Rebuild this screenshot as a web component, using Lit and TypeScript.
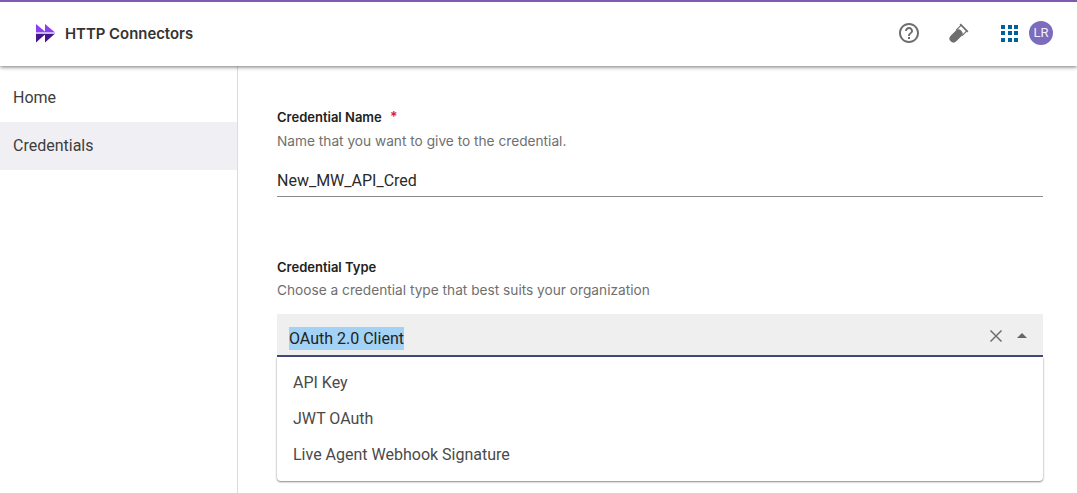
import { LitElement, html, css } from "lit";
import { customElement } from "lit/decorators.js";

@customElement("app-root")
export class AppRoot extends LitElement {
  static styles = css`
    :host { display: block; width: 1077px; height: 493px; overflow: hidden; background: #fff; font-family: Roboto, sans-serif; color: #3a3a3a; }
    .header { position: relative; z-index: 2; border-top: 2px solid #7d5bb0; background: #fff; box-shadow: 0 1px 4px rgba(0,0,0,.55); display: flex; align-items: center; padding: 0 24px 2px 36px; box-sizing: border-box; height: 66px; }
    .logo { width: 19px; height: 19px; margin-right: 10px; flex: none; }
    .title { font: 600 14.9px Inter, sans-serif; color: #333; flex: 1; padding-top: 2px; }
    .help { width: 24px; height: 24px; margin-right: 26px; }
    .flask { width: 24px; height: 24px; margin-right: 30px; }
    .grid { width: 17px; height: 17px; margin-right: 11px; display: grid; grid-template-columns: repeat(3, 4px); grid-auto-rows: 4px; gap: 2.5px; }
    .grid i { background: #00609c; display: block; }
    .avatar { width: 24px; height: 24px; border-radius: 50%; background: #7d6bbd; color: #f2f0fa; font: 400 13px/24px Roboto, sans-serif; text-align: center; }
    .body { display: flex; height: 427px; }
    .side { width: 237px; border-right: 1px solid #dcdcdc; padding-top: 8px; flex: none; }
    .nav { height: 48px; padding-left: 13px; padding-bottom: 1px; display: flex; align-items: center; font-size: 16px; line-height: 20px; box-sizing: border-box; color: #3d3d3d; }
    .nav.active { background: #f0f0f4; }
    .main { flex: 1; padding: 43px 34px 0 39px; }
    .label { font: 600 13px/16px Inter, sans-serif; color: #222; }
    .req { color: #e0202e; margin-left: 5px; font-size: 14px; }
    .hint { font: 400 13.7px/16px Inter, sans-serif; color: #6f6f6f; margin-top: 8px; }
    .input { height: 34px; margin-top: 14px; box-sizing: border-box; border-bottom: 1px solid #8a8a8a; font: 400 16px/35px Roboto, sans-serif; color: #2a2a2a; }
    .field2 { margin-top: 62px; }
    .field2 .hint { margin-top: 7px; }
    .combo { position: relative; margin-top: 16px; }
    .select { height: 43px; box-sizing: border-box; background: #efefef; border-bottom: 2px solid #444a7a; display: flex; align-items: center; padding: 8px 13px 0 12px; }
    .select .val { flex: 1; font-size: 16px; line-height: 23px; color: #222; }
    .val span { background: #a2d2f5; display: inline-block; }
    .x { width: 14px; height: 14px; margin-right: 14px; margin-top: -5px; }
    .caret { width: 0; height: 0; border: 5px solid transparent; border-top: 0; border-bottom: 5px solid #666; margin-top: -6px; margin-right: 3px; }
    .menu { position: absolute; left: 0; right: 0; top: 43px; height: 124px; background: #fff; border-radius: 0 0 4px 4px; box-shadow: 0 1px 2px rgba(0,0,0,.45), 0 0 3px rgba(0,0,0,.08); padding: 7px 0; box-sizing: border-box; }
    .opt { height: 36px; padding-left: 16px; display: flex; align-items: center; font-size: 16px; color: #4a4a4a; }
  `;

  render() {
    return html`
      <div class="header">
        <svg class="logo" viewBox="0 0 19 19">
          <path d="M0 0 L9.500 8 H0 Z M9 0 L18.500 8 H9 Z" fill="#8c3ff0"/>
          <rect x="0" y="8" width="19" height="2" fill="#c9b4f0"/>
          <path d="M0 10 H9.500 L0 18.500 Z M9 10 H18.500 L9 18.500 Z" fill="#45158c"/>
        </svg>
        <div class="title">HTTP Connectors</div>
        <svg class="help" viewBox="0 0 24 24" fill="#6e6e6e"><path d="M11 18h2v-2h-2v2zm1-16C6.480 2 2 6.480 2 12s4.480 10 10 10 10-4.480 10-10S17.520 2 12 2zm0 18c-4.410 0-8-3.590-8-8s3.590-8 8-8 8 3.590 8 8-3.590 8-8 8zm0-14c-2.210 0-4 1.790-4 4h2c0-1.100.900-2 2-2s2 .900 2 2c0 2-3 1.750-3 5h2c0-2.250 3-2.500 3-5 0-2.210-1.790-4-4-4z"/></svg>
        <svg class="flask" viewBox="0 0 24 24" fill="none" stroke="#6e6e6e">
          <path d="M6.500 17.500L11.500 12.500" stroke-width="8" stroke-linecap="round"/>
          <path d="M9.200 9.200L14.200 4.200M14.800 14.800L19.800 9.800" stroke-width="1.200"/>
          <path d="M13.200 3.200L20.800 10.800" stroke-width="1.800"/>
        </svg>
        <div class="grid">${Array.from({ length: 9 }, () => html`<i></i>`)}</div>
        <div class="avatar">LR</div>
      </div>
      <div class="body">
        <div class="side">
          <div class="nav">Home</div>
          <div class="nav active">Credentials</div>
        </div>
        <div class="main">
          <div class="label">Credential Name <span class="req">*</span></div>
          <div class="hint">Name that you want to give to the credential.</div>
          <div class="input">New_MW_API_Cred</div>
          <div class="field2">
            <div class="label">Credential Type</div>
            <div class="hint">Choose a credential type that best suits your organization</div>
            <div class="combo">
              <div class="select">
                <div class="val"><span>OAuth 2.0 Client</span></div>
                <svg class="x" viewBox="0 0 14 14" stroke="#6e6e6e" stroke-width="1.500" fill="none"><path d="M1.500 1.500l11 11M12.500 1.500l-11 11"/></svg>
                <div class="caret"></div>
              </div>
              <div class="menu">
                <div class="opt">API Key</div>
                <div class="opt">JWT OAuth</div>
                <div class="opt">Live Agent Webhook Signature</div>
              </div>
            </div>
          </div>
        </div>
      </div>
    `;
  }
}
